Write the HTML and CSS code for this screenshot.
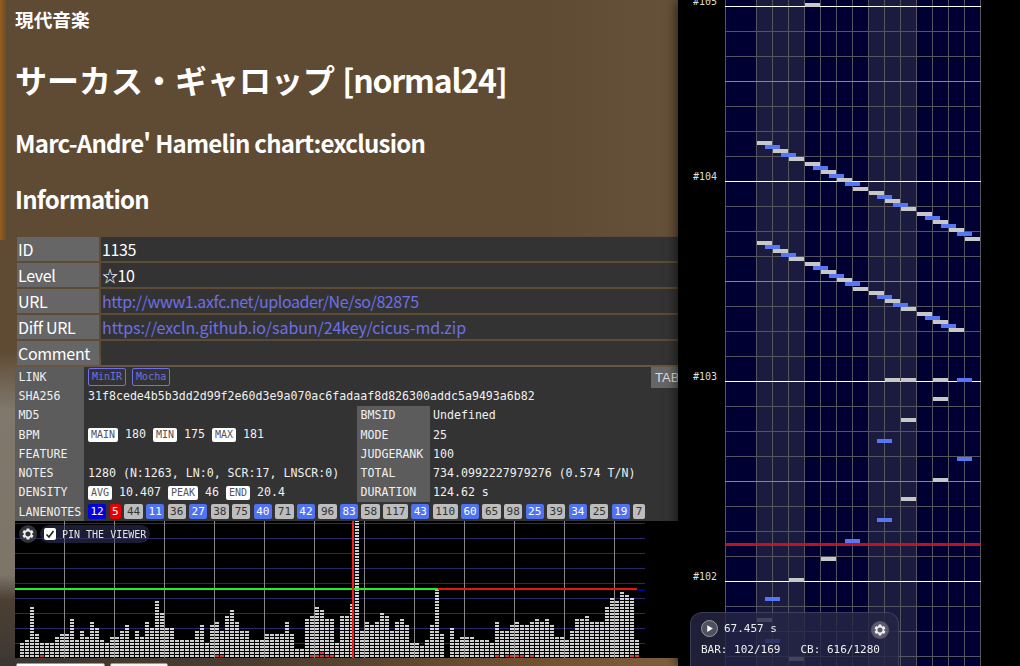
FILE: index.html
```html
<!DOCTYPE html>
<html lang="ja">
<head>
    <meta charset="UTF-8">
    <title>サーカス・ギャロップ [normal24]</title>
    <link rel="stylesheet" href="styles.css">
</head>
<body>
    <svg class="defs" width="0" height="0">
        <symbol id="gear" viewBox="0 0 24 24">
            <path fill-rule="evenodd" d="M19.14 12.94c.04-.3.06-.61.06-.94 0-.32-.02-.64-.07-.94l2.03-1.58a.49.49 0 0 0 .12-.61l-1.92-3.32a.488.488 0 0 0-.59-.22l-2.39.96c-.5-.38-1.03-.7-1.62-.94l-.36-2.54a.484.484 0 0 0-.48-.41h-3.84c-.24 0-.43.17-.47.41l-.36 2.54c-.59.24-1.13.57-1.62.94l-2.39-.96c-.22-.08-.47 0-.59.22L2.74 8.87c-.12.21-.08.47.12.61l2.03 1.58c-.05.3-.09.63-.09.94s.02.64.07.94l-2.03 1.58a.49.49 0 0 0-.12.61l1.92 3.32c.12.22.37.29.59.22l2.39-.96c.5.38 1.03.7 1.62.94l.36 2.54c.05.24.24.41.48.41h3.84c.24 0 .44-.17.47-.41l.36-2.54c.59-.24 1.13-.56 1.62-.94l2.39.96c.22.08.47 0 .59-.22l1.92-3.32c.12-.22.07-.47-.12-.61l-2.01-1.58zM12 16.4c-2.43 0-4.4-1.97-4.4-4.4s1.97-4.4 4.4-4.4 4.4 1.97 4.4 4.4-1.97 4.4-4.4 4.4z"/>
        </symbol>
    </svg>

    <main class="info">
        <h3 class="genre">現代音楽</h3>
        <h1 class="title">サーカス・ギャロップ <span class="title-latin">[normal24]</span></h1>
        <h2 class="artist">Marc-Andre' Hamelin chart:exclusion</h2>
        <h2 class="section">Information</h2>

        <table class="meta">
            <tr><th>ID</th><td>1135</td></tr>
            <tr><th>Level</th><td>☆10</td></tr>
            <tr><th>URL</th><td><a href="#">http://www1.axfc.net/uploader/Ne/so/82875</a></td></tr>
            <tr><th>Diff URL</th><td><a class="diff-url" href="#">https://excln.github.io/sabun/24key/cicus-md.zip</a></td></tr>
            <tr><th>Comment</th><td></td></tr>
        </table>

        <div class="details-wrap">
            <table class="details">
                <colgroup>
                    <col class="col-th1"><col class="col-td1"><col class="col-th2"><col class="col-td2">
                </colgroup>
                <tr>
                    <th>LINK</th>
                    <td colspan="3"><a class="link-tag" href="#">MinIR</a> <a class="link-tag" href="#">Mocha</a></td>
                </tr>
                <tr>
                    <th>SHA256</th>
                    <td colspan="3">31f8cede4b5b3dd2d99f2e60d3e9a070ac6fadaaf8d826300addc5a9493a6b82</td>
                </tr>
                <tr><th>MD5</th><td></td><th>BMSID</th><td>Undefined</td></tr>
                <tr>
                    <th>BPM</th>
                    <td><span class="tag">MAIN</span> 180 <span class="tag">MIN</span> 175 <span class="tag">MAX</span> 181</td>
                    <th>MODE</th><td>25</td>
                </tr>
                <tr><th>FEATURE</th><td></td><th>JUDGERANK</th><td>100</td></tr>
                <tr>
                    <th>NOTES</th><td>1280 (N:1263, LN:0, SCR:17, LNSCR:0)</td>
                    <th>TOTAL</th><td>734.0992227979276 (0.574 T/N)</td>
                </tr>
                <tr>
                    <th>DENSITY</th>
                    <td><span class="tag">AVG</span> 10.407 <span class="tag">PEAK</span> 46 <span class="tag">END</span> 20.4</td>
                    <th>DURATION</th><td>124.62 s</td>
                </tr>
                <tr>
                    <th>LANENOTES</th>
                    <td colspan="3" class="lanes">
                        <span class="lane scr">12</span><span class="lane red">5</span><span class="lane wh">44</span><span class="lane bl">11</span><span class="lane wh">36</span><span class="lane bl">27</span><span class="lane wh">38</span><span class="lane wh">75</span><span class="lane bl">40</span><span class="lane wh">71</span><span class="lane bl">42</span><span class="lane wh">96</span><span class="lane bl">83</span><span class="lane wh">58</span><span class="lane wh">117</span><span class="lane bl">43</span><span class="lane wh">110</span><span class="lane bl">60</span><span class="lane wh">65</span><span class="lane wh">98</span><span class="lane bl">25</span><span class="lane wh">39</span><span class="lane bl">34</span><span class="lane wh">25</span><span class="lane bl">19</span><span class="lane wh">7</span>
                    </td>
                </tr>
            </table>
            <span class="tab-btn">TABLE</span>
        </div>

        <div class="graph">
            <canvas id="graph" width="630" height="137"></canvas>
            <div class="graph-tools">
                <span class="gear-btn"><svg class="gear"><use href="#gear"/></svg></span>
                <label class="pin"><span class="check"><svg viewBox="0 0 12 12"><path d="M2.5 6.5 5 9l4.5-6" fill="none" stroke="#222" stroke-width="1.6"/></svg></span>PIN THE VIEWER</label>
            </div>
        </div>

        <div class="buttons">
            <span class="btn btn-wide"></span>
            <span class="btn btn-small"></span>
        </div>
    </main>

    <aside class="viewer">
        <div class="sheet">
            <canvas id="sheet" width="256" height="666"></canvas>
            <span class="bar-label bar-105">#105</span>
            <span class="bar-label bar-104">#104</span>
            <span class="bar-label bar-103">#103</span>
            <span class="bar-label bar-102">#102</span>
        </div>
        <div class="player">
            <div class="player-row">
                <span class="play"><svg viewBox="0 0 12 12"><path d="M3 1.5v9l7.5-4.5z" fill="#fff"/></svg></span>
                <span class="time">67.457 s</span>
                <span class="gear-btn player-gear"><svg class="gear"><use href="#gear"/></svg></span>
            </div>
            <div class="player-stats">
                <span>BAR: 102/169</span>
                <span>CB: 616/1280</span>
            </div>
        </div>
    </aside>

    <script src="script.js"></script>
</body>
</html>
```

FILE: styles.css
```css
:root {
    --mono: 'DejaVu Sans Mono', monospace;
    --link: #6f6fe6;
    --cell-dark: #333;
    --cell-head: #666;
}

html, body {
    margin: 0;
    height: 666px;
    overflow: hidden;
    background: #000;
}

body {
    display: grid;
    grid-template-columns: 678px 342px;
    color: #fff;
    font-family: 'Noto Sans CJK JP', 'Noto Sans', sans-serif;
}

.defs {
    position: absolute;
}

.info {
    position: relative;
    height: 666px;
    overflow: hidden;
    padding-left: 15px;
    box-sizing: border-box;
    background:
        linear-gradient(90deg, rgba(170, 100, 20, 0.75), rgba(170, 100, 20, 0) 7px) 0 0 / 100% 240px no-repeat,
        linear-gradient(90deg, rgba(0, 0, 0, 0) 80%, rgba(150, 130, 105, 0.12)) 0 0 / 100% 236px no-repeat,
        linear-gradient(90deg, #3c3733 0, #4a3d30 260px, #6e5030 520px, #7d5f3c 678px) 0 658px / 100% 8px no-repeat,
        linear-gradient(180deg, #5f4a33 0, #5f4a33 350px, #80786c 410px, #7c7568 575px, #4c3f33 600px, #3d3834 666px);
}

.genre, .title, .artist, .section {
    margin: 0;
    font-weight: 700;
}

.genre {
    font-size: 18.7px;
    line-height: 24px;
    margin-top: 7px;
}

.title {
    font-size: 32px;
    line-height: 46px;
    margin-top: 25px;
}

.title-latin {
    letter-spacing: -1.2px;
}

.artist, .section {
    font-size: 24px;
    line-height: 32px;
    margin-top: 24px;
    letter-spacing: -0.75px;
}

.artist {
    margin-top: 25px;
}

.meta {
    width: 670px;
    margin-top: 20px;
    table-layout: fixed;
    border-spacing: 2px;
    font-size: 16px;
}

.meta th, .meta td {
    height: 24px;
    padding: 0 1px;
    line-height: 24px;
    text-align: left;
    font-weight: 400;
    letter-spacing: -0.4px;
    background: var(--cell-dark);
}

.meta th {
    width: 80px;
    letter-spacing: -0.3px;
    background: var(--cell-head);
}

a {
    color: var(--link);
    text-decoration: none;
}

.meta .diff-url {
    letter-spacing: -0.08px;
}

.details-wrap {
    position: relative;
}

.details {
    width: 700px;
    table-layout: fixed;
    border-collapse: collapse;
    font-family: var(--mono);
    font-size: 11.6px;
    background: var(--cell-dark);
}

.col-th1 { width: 69px; }
.col-td1 { width: 273px; }
.col-th2 { width: 73px; }

.details th, .details td {
    height: 19.3px;
    padding: 0 4px;
    text-align: left;
    font-weight: 400;
    white-space: nowrap;
    color: #f0f0f0;
}

.details th {
    padding-left: 3.5px;
    background: #5c5c5c;
}

.details th + td + th + td {
    padding-left: 3px;
}

.link-tag {
    display: inline-block;
    padding: 0 3px;
    line-height: 16px;
    margin-right: -1px;
    border: 1px solid var(--link);
    border-radius: 2px;
    font-size: 10px;
    color: var(--link);
}

.tag {
    display: inline-block;
    padding: 0 3px;
    line-height: 14px;
    border-radius: 2px;
    font-size: 10px;
    color: #555;
    background: #fff;
}

.lanes {
    font-size: 0;
}

.lane {
    display: inline-block;
    margin-right: 3.3px;
    padding: 0 2.5px;
    line-height: 15px;
    border-radius: 2px;
    font-size: 11px;
}

.lane.scr { background: #0000e0; color: #fff; }
.lane.red { background: #e80000; color: #fff; }
.lane.wh { background: #bdbdbd; color: #333; }
.lane.bl { background: #4f72f2; color: #fff; }

.tab-btn {
    position: absolute;
    top: 0;
    left: 636px;
    padding: 0 4px;
    line-height: 21px;
    font-family: 'Liberation Sans', sans-serif;
    font-size: 13px;
    color: #ddd;
    background: #666;
}

.graph {
    position: relative;
    height: 137px;
    background: #000;
}

.graph canvas {
    display: block;
}

.graph-tools {
    position: absolute;
    top: 4px;
    left: 4px;
    display: flex;
    align-items: center;
    gap: 3px;
}

.gear-btn {
    display: flex;
    align-items: center;
    justify-content: center;
    width: 18px;
    height: 18px;
    border-radius: 50%;
    background: rgba(70, 70, 80, 0.7);
}

.gear {
    width: 14px;
    height: 14px;
    fill: #eee;
}

.pin {
    display: flex;
    align-items: center;
    gap: 6px;
    height: 18px;
    padding: 0 4px;
    border-radius: 9px;
    font-family: var(--mono);
    font-size: 10px;
    color: #e4e4e4;
    background: rgba(55, 55, 100, 0.5);
}

.check {
    display: block;
    width: 12px;
    height: 12px;
    border-radius: 2px;
    background: #fff;
}

.check svg {
    display: block;
}

.buttons {
    display: flex;
    gap: 5px;
    margin-top: 5px;
    padding-left: 1px;
}

.btn {
    display: block;
    height: 24px;
    box-sizing: border-box;
    border: 1px solid #999;
    border-radius: 2px;
    background: #f4f4f4;
}

.btn-wide { width: 89px; background: #fff; }
.btn-small { width: 58px; }

.viewer {
    position: relative;
    z-index: 1;
    height: 666px;
    background: #000;
    box-shadow: 0 0 12px rgba(0, 0, 0, 0.75);
}

.sheet canvas {
    display: block;
    margin-left: 47px;
}

.bar-label {
    position: absolute;
    left: 15px;
    font-family: var(--mono);
    font-size: 10px;
    line-height: 12px;
    color: #ddd;
}

.bar-105 { top: -4px; }
.bar-104 { top: 171px; }
.bar-103 { top: 371px; }
.bar-102 { top: 571px; }

.player {
    position: absolute;
    left: 12px;
    top: 612px;
    width: 209px;
    height: 70px;
    box-sizing: border-box;
    padding: 6px 10px;
    border-radius: 12px;
    border: 1px solid rgba(110, 110, 140, 0.35);
    font-family: var(--mono);
    font-size: 11px;
    color: #f0f0f0;
    background: rgba(38, 38, 68, 0.82);
}

.player-row {
    display: flex;
    align-items: center;
    height: 18px;
}

.play {
    display: flex;
    align-items: center;
    justify-content: center;
    width: 15px;
    height: 15px;
    border: 1px solid #999;
    border-radius: 50%;
    background: rgba(255, 255, 255, 0.22);
}

.play svg {
    width: 9px;
    height: 9px;
}

.time {
    margin-left: 6px;
    font-size: 11px;
}

.player-gear {
    margin-left: auto;
    margin-right: -1px;
    margin-top: 4px;
    background: rgba(125, 125, 135, 0.6);
}

.player-stats {
    display: flex;
    gap: 20px;
    margin-top: 6px;
}
```

FILE: script.js
```js
// note count per column of the density graph, left to right
const density = [
    5, 6, 17, 8, 5, 5, 5, 7, 8, 8, 13, 6, 9, 7, 12, 10, 6, 5, 7, 7,
    9, 11, 6, 9, 7, 12, 10, 19, 15, 10, 10, 6, 6, 6, 6, 9, 11, 5, 11, 12,
    9, 14, 16, 12, 9, 9, 6, 6, 6, 8, 8, 8, 8, 12, 8, 3, 3, 13, 14, 17,
    16, 13, 13, 5, 14, 14, 18, 46, 9, 12, 11, 12, 15, 14, 9, 12, 13, 11, 5, 5,
    4, 6, 11, 23, 8, 0, 10, 6, 7, 7, 7, 6, 6, 6, 5, 12, 9, 9, 11, 12,
    11, 11, 12, 13, 12, 13, 11, 7, 7, 6, 9, 13, 13, 14, 12, 12, 12, 17, 20, 19,
    22, 21, 20, 6
];

// columns whose lowest segments are drawn red (scratch notes)
const scratch = { 4: 1, 39: 1, 40: 1, 58: 1, 59: 1, 60: 2, 61: 1, 62: 1, 95: 1, 97: 1, 98: 1, 99: 1, 100: 1, 102: 1, 122: 1, 123: 1 };

function drawGraph() {
    const ctx = document.getElementById('graph').getContext('2d');
    ctx.fillStyle = '#000';
    ctx.fillRect(0, 0, 630, 137);

    density.forEach((count, col) => {
        for (let i = 0; i < count; i++) {
            ctx.fillStyle = i < (scratch[col] || 0) ? '#e04040' : '#cfcfcf';
            ctx.fillRect(5 + col * 5, 134 - i * 3, 4, 2);
        }
    });

    ctx.globalCompositeOperation = 'screen';
    ctx.fillStyle = '#28286a';
    for (let y = 2; y < 137; y += 15) {
        ctx.fillRect(0, y, 630, 1);
    }
    ctx.globalCompositeOperation = 'source-over';

    ctx.fillStyle = '#868686';
    for (let x = 49; x < 630; x += 50) {
        ctx.fillRect(x, 0, 1, 137);
    }

    ctx.fillStyle = '#22ee22';
    ctx.fillRect(0, 67, 423, 2);
    ctx.fillStyle = '#ee1111';
    ctx.fillRect(423, 67, 199, 2);
    ctx.fillStyle = '#000099';
    ctx.fillRect(622, 68, 8, 2);
    ctx.fillStyle = '#f02020';
    ctx.fillRect(337, 0, 2, 137);
}

// [half-lane, top y]
const whiteNotes = [
    [6, 3],
    [0, 141], [2, 149], [4, 157], [6, 162], [8, 170], [10, 178], [12, 187], [14, 191], [16, 199],
    [18, 207], [20, 212], [22, 220], [24, 228], [26, 237],
    [0, 241], [2, 249], [4, 257], [6, 262], [8, 270], [10, 278], [12, 287], [14, 291], [16, 299],
    [18, 307], [20, 312], [22, 320], [24, 328],
    [16, 378], [18, 378], [22, 378], [22, 397], [18, 418], [22, 478], [18, 497],
    [8, 557], [4, 578], [0, 618], [4, 657]
];
const blueNotes = [
    [1, 145], [3, 153], [7, 166], [9, 174], [11, 182], [15, 195], [17, 203], [21, 216], [23, 224], [25, 232],
    [1, 245], [3, 253], [7, 266], [9, 274], [11, 282], [15, 295], [17, 303], [21, 316], [23, 324],
    [25, 378], [15, 439], [25, 457], [15, 518], [11, 539], [1, 597], [1, 639]
];

function drawSheet() {
    const ctx = document.getElementById('sheet').getContext('2d');
    ctx.fillStyle = '#000033';
    ctx.fillRect(0, 0, 256, 666);

    ctx.fillStyle = '#1b1b40';
    ctx.fillRect(31, 0, 48, 666);
    ctx.fillRect(143, 0, 48, 666);

    ctx.fillStyle = '#55555f';
    for (let y = 6; y < 666; y += 25) {
        ctx.fillRect(0, y, 256, 1);
    }
    ctx.fillRect(0, 0, 1, 666);
    for (let x = 31; x < 256; x += 16) {
        ctx.fillRect(x, 0, 1, 666);
    }

    ctx.fillStyle = '#85858f';
    [81, 281, 481].forEach((y) => ctx.fillRect(0, y, 256, 1));
    ctx.fillStyle = '#fff';
    [6, 181, 381, 581].forEach((y) => ctx.fillRect(0, y, 256, 1));

    ctx.fillStyle = '#c8c8c8';
    whiteNotes.forEach(([k, y]) => ctx.fillRect(32 + k * 8, y, 15, 4));
    ctx.fillStyle = '#5577f5';
    blueNotes.forEach(([k, y]) => ctx.fillRect(32 + k * 8, y, 15, 4));

    ctx.fillStyle = 'rgba(205, 20, 35, 0.9)';
    ctx.fillRect(0, 543, 256, 3);
}

drawGraph();
drawSheet();
```
